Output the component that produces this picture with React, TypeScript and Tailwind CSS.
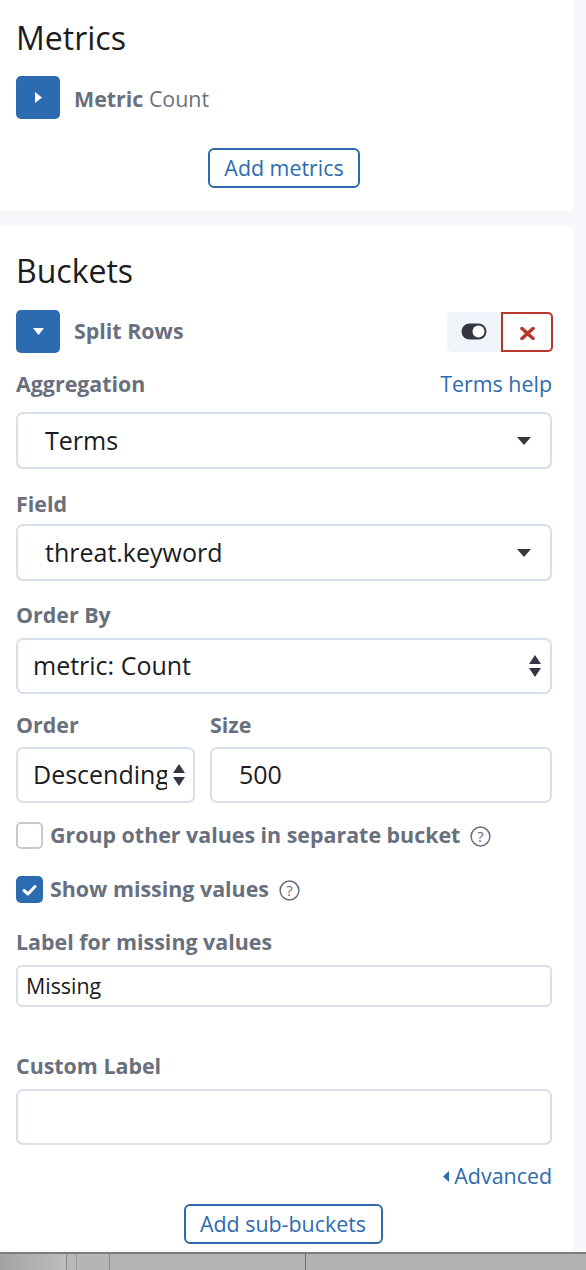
import React from "react";

const BLUE = "#2d6bb0";

function Caret() {
  return (
    <svg width="14" height="8" viewBox="0 0 14 8" className="shrink-0">
      <path d="M0 0 L14 0 L7 8 Z" fill="#343741" />
    </svg>
  );
}

function UpDown() {
  return (
    <svg width="12" height="22" viewBox="0 0 12 22" className="shrink-0">
      <path d="M6 0 L12 9 L0 9 Z" fill="#343741" />
      <path d="M0 13 L12 13 L6 22 Z" fill="#343741" />
    </svg>
  );
}

function Help() {
  return (
    <svg width="21" height="21" viewBox="0 0 21 21" className="shrink-0">
      <circle cx="10.5" cy="10.5" r="9.4" fill="none" stroke="#69707d" strokeWidth="1.5" />
      <text x="10.5" y="15.6" textAnchor="middle" fontSize="15" fill="#69707d" fontFamily="Open Sans, sans-serif">?</text>
    </svg>
  );
}

function Label({ children, className = "" }: { children: React.ReactNode; className?: string }) {
  return (
    <div className={"text-[21.4px] leading-[28px] font-bold text-[#69707d] " + className}>{children}</div>
  );
}

export default function App() {
  return (
    <div className="w-[586px] h-[1270px] overflow-hidden bg-[#f5f7fa] font-['Open_Sans',sans-serif] flex flex-col">
      {/* Metrics card */}
      <div className="w-[574px] h-[211px] shrink-0 bg-white rounded-br-[6px] pl-4 pt-[18px] flex flex-col">
        <div className="text-[32px] leading-[40px] text-[#1a1c21]">Metrics</div>
        <div className="mt-[18px] flex items-center h-[43px]">
          <div className="w-[44px] h-[43px] rounded-[5px] flex items-center justify-center" style={{ background: BLUE }}>
            <svg width="7" height="11" viewBox="0 0 7 11"><path d="M0 0 L7 5.5 L0 11 Z" fill="white" /></svg>
          </div>
          <div className="ml-[14px] mt-[4px] text-[21.4px] text-[#69707d]">
            <span className="font-bold">Metric</span> Count
          </div>
        </div>
        <div className="mt-[29px] flex justify-center pr-4">
          <div className="w-[152px] h-[40px] border-2 border-[#2d6bb0] rounded-[6px] flex items-center justify-center text-[21.4px] text-[#2d6bb0] ml-[-6px]">
            Add metrics
          </div>
        </div>
      </div>

      {/* Buckets card */}
      <div className="mt-[15px] w-[574px] h-[1025px] shrink-0 bg-white rounded-r-[6px] pl-4 pr-[22px] pt-[25px] flex flex-col">
        <div className="text-[32px] leading-[40px] text-[#1a1c21]">Buckets</div>
        <div className="mt-[19px] flex items-center h-[43px]">
          <div className="w-[44px] h-[43px] rounded-[5px] flex items-center justify-center" style={{ background: BLUE }}>
            <svg width="11" height="7" viewBox="0 0 11 7"><path d="M0 0 L11 0 L5.5 7 Z" fill="white" /></svg>
          </div>
          <div className="ml-[14px] text-[21.4px] font-bold text-[#69707d]">Split Rows</div>
          <div className="ml-auto flex h-[40px] mr-[-1px]">
            <div className="w-[54px] h-[40px] bg-[#f1f4fa] rounded-l-[5px] flex items-center justify-center">
              <svg width="26" height="17" viewBox="0 0 26 17">
                <rect x="0.5" y="0.5" width="25" height="16" rx="8" fill="#343741" />
                <circle cx="17.5" cy="8.5" r="6" fill="white" />
              </svg>
            </div>
            <div className="w-[52px] h-[40px] border-2 border-[#b5382d] rounded-r-[5px] flex items-center justify-center pt-[4px]">
              <svg width="15" height="13" viewBox="0 0 15 13">
                <path d="M2 1.5 L13 11.5 M13 1.5 L2 11.5" stroke="#b5382d" strokeWidth="3.6" strokeLinecap="round" />
              </svg>
            </div>
          </div>
        </div>

        <div className="mt-[17px] flex items-center justify-between">
          <Label>Aggregation</Label>
          <div className="text-[21.4px] leading-[28px] text-[#2d6bb0]">Terms help</div>
        </div>
        <div className="mt-[14px] h-[57px] border-2 border-[#d9dfea] rounded-[7px] flex items-center pl-[27px] pr-[19px]">
          <span className="text-[25px] text-[#1a1c21]">Terms</span>
          <span className="ml-auto"><Caret /></span>
        </div>

        <Label className="mt-[21px]">Field</Label>
        <div className="mt-[6px] h-[57px] border-2 border-[#d9dfea] rounded-[7px] flex items-center pl-[27px] pr-[19px]">
          <span className="text-[25px] text-[#1a1c21]">threat.keyword</span>
          <span className="ml-auto"><Caret /></span>
        </div>

        <Label className="mt-[20px]">Order By</Label>
        <div className="mt-[9px] h-[56px] border-2 border-[#d9dfea] rounded-[7px] flex items-center pl-[15px] pr-[9px]">
          <span className="text-[25px] text-[#1a1c21]">metric: Count</span>
          <span className="ml-auto"><UpDown /></span>
        </div>

        <div className="mt-[17px] flex">
          <Label className="w-[194px]">Order</Label>
          <Label>Size</Label>
        </div>
        <div className="mt-[8px] flex gap-[15px]">
          <div className="w-[179px] h-[56px] border-2 border-[#d9dfea] rounded-[7px] flex items-center pl-[15px] pr-[8px] overflow-hidden">
            <span className="text-[25px] text-[#1a1c21] whitespace-nowrap overflow-hidden w-[134px] shrink-0">Descending</span>
            <span className="ml-auto"><UpDown /></span>
          </div>
          <div className="flex-1 h-[56px] border-2 border-[#d9dfea] rounded-[7px] flex items-center pl-[27px]">
            <span className="text-[25px] text-[#1a1c21]">500</span>
          </div>
        </div>

        <div className="mt-[19px] flex items-center h-[27px]">
          <div className="w-[27px] h-[27px] border-2 border-[#c9c9c9] rounded-[5px] bg-white shrink-0" />
          <span className="ml-[7px] text-[21.4px] font-bold text-[#69707d] whitespace-nowrap">Group other values in separate bucket</span>
          <span className="ml-[10px] mt-[2px]"><Help /></span>
        </div>

        <div className="mt-[27px] flex items-center h-[27px]">
          <div className="w-[27px] h-[27px] rounded-[5px] flex items-center justify-center shrink-0" style={{ background: BLUE }}>
            <svg width="15" height="12" viewBox="0 0 15 12">
              <path d="M2 6.5 L6 10 L13 2.5" fill="none" stroke="white" strokeWidth="3" strokeLinecap="round" strokeLinejoin="round" />
            </svg>
          </div>
          <span className="ml-[7px] text-[21.4px] font-bold text-[#69707d]">Show missing values</span>
          <span className="ml-[10px] mt-[2px]"><Help /></span>
        </div>

        <Label className="mt-[25px]">Label for missing values</Label>
        <div className="mt-[9px] h-[42px] border-2 border-[#d9dfea] rounded-[6px] flex items-center pl-[8px]">
          <span className="text-[21.4px] text-[#1a1c21]">Missing</span>
        </div>

        <Label className="mt-[45px]">Custom Label</Label>
        <div className="mt-[9px] h-[56px] border-2 border-[#d9dfea] rounded-[7px]" />

        <div className="mt-[17px] flex items-center justify-end h-[28px]">
          <svg width="6" height="11" viewBox="0 0 6 11" className="mr-[5px]"><path d="M6 0 L0 5.5 L6 11 Z" fill="#2d6bb0" /></svg>
          <span className="text-[21.4px] text-[#2d6bb0]">Advanced</span>
        </div>

        <div className="mt-[14px] flex justify-center pr-[2px]">
          <div className="w-[199px] h-[40px] border-2 border-[#2d6bb0] rounded-[6px] flex items-center justify-center text-[21.4px] text-[#2d6bb0]">
            Add sub-buckets
          </div>
        </div>
      </div>

      {/* bottom strip */}
      <div className="mt-[1px] flex-1 border-t-2 border-[#7d7d7d] flex bg-[#b3b3b3]">
        <div className="w-[67px] bg-gradient-to-r from-[#a3a3a3] to-[#bdbdbd] border-r border-[#8a8a8a]" />
        <div className="w-[10px] bg-[#b8b8b8] border-r border-[#9a9a9a]" />
        <div className="w-[33px] bg-[#b5b5b5] border-r border-[#8a8a8a]" />
        <div className="w-[196px] bg-[#b4b4b4] border-r border-[#6e6e6e]" />
        <div className="flex-1 bg-[#b2b2b2]" />
      </div>
    </div>
  );
}
